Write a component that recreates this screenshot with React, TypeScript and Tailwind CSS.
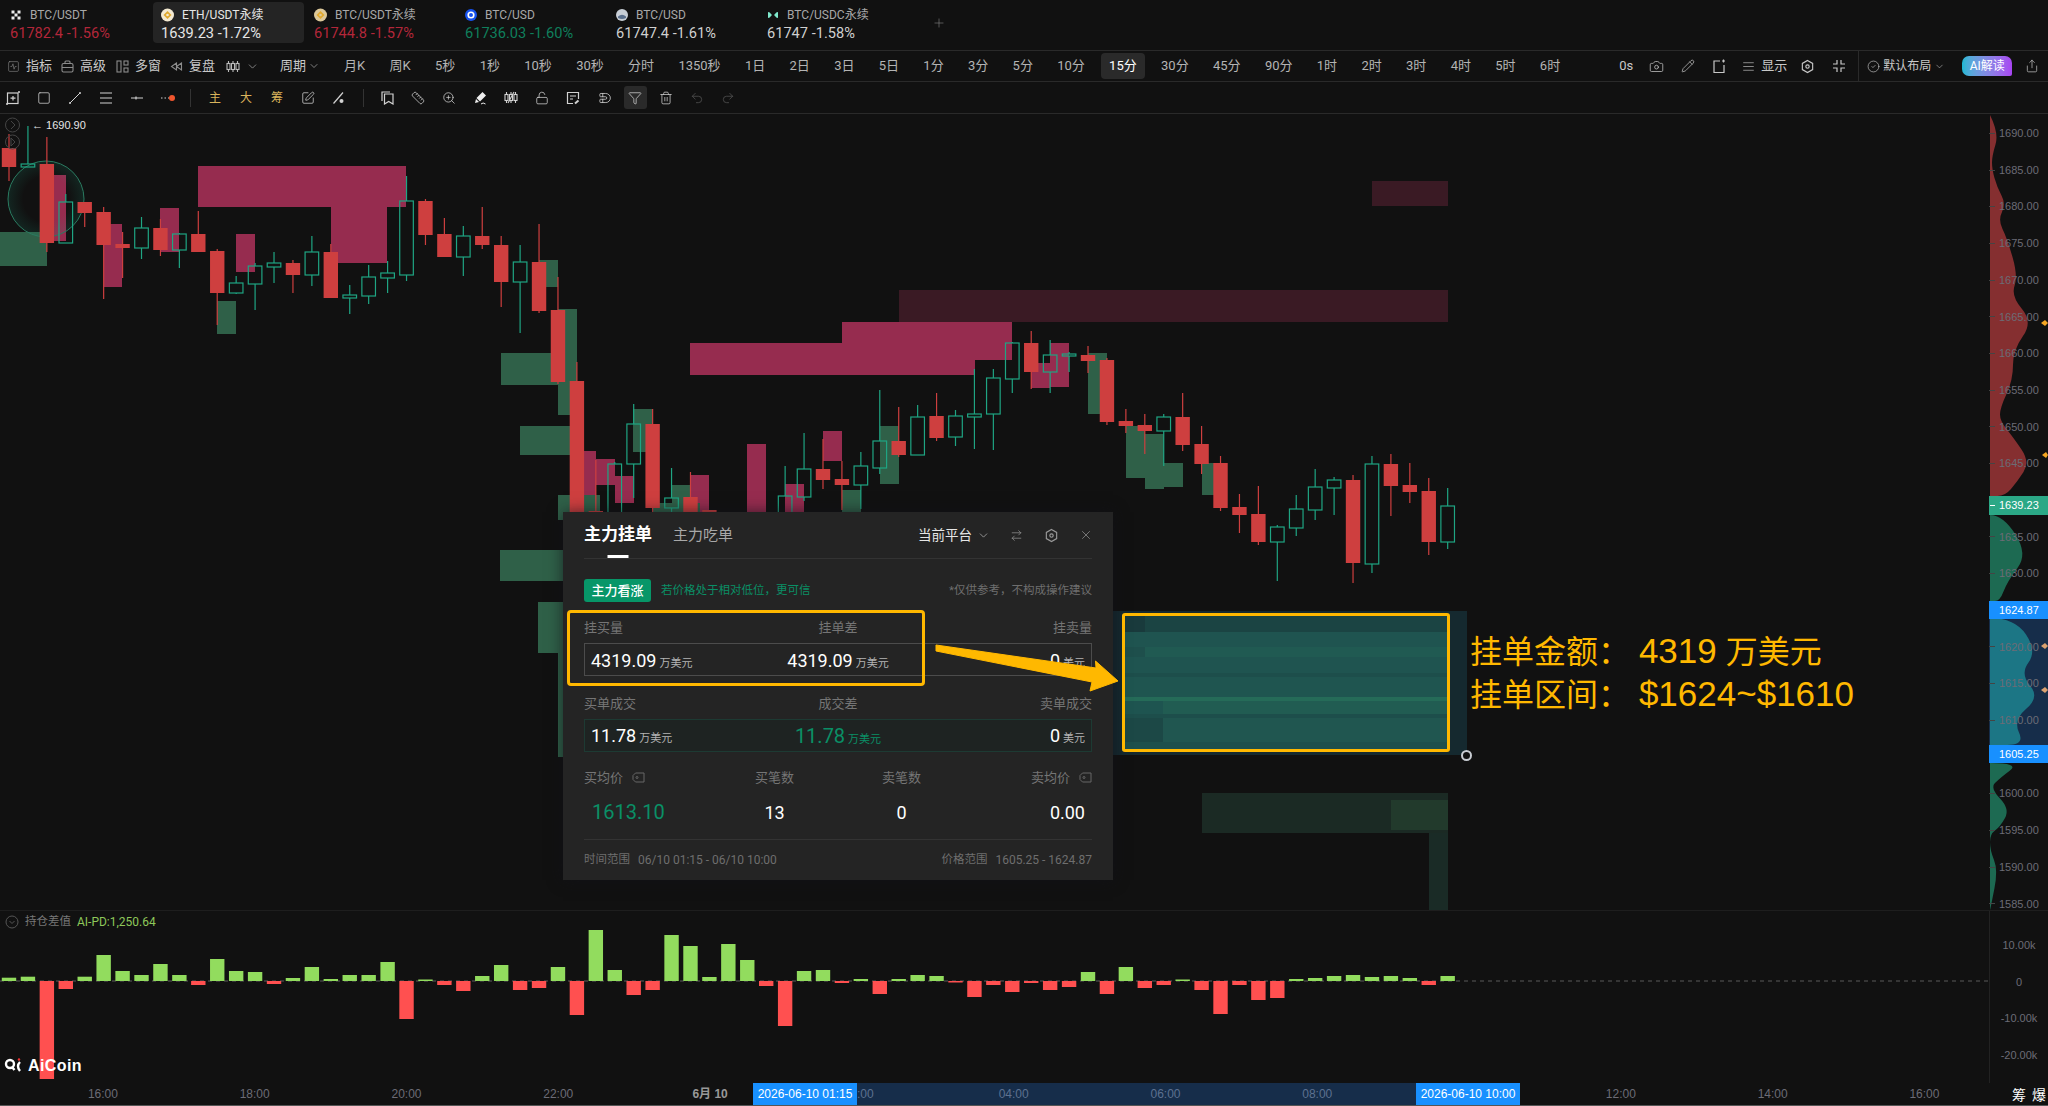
import React from 'react';
import {
  SquareActivity, Camera, Pencil, AlignJustify, ChevronDown, CircleCheck, Share, Square, Ruler, ZoomIn, LockOpen,
  Magnet, Filter, Trash2, Undo2, Redo2, Plus, X, ArrowRightLeft, SquarePen,
} from 'lucide-react';

const RED = '#ce3f3f';
const TEAL = '#1fa583';
const PINK = '#962c4f';
const MOSS = '#2f6048';

// [up, high, top, bottom, low] in page pixels
const candles: [number, number, number, number, number][] = [
  [0, 134, 148, 167, 181], [1, 126, 164, 167, 167], [0, 137, 164, 243, 252], [1, 194, 202, 243, 243],
  [0, 202, 202, 213, 227], [0, 207, 212, 245, 299], [0, 232, 244, 248, 278], [1, 217, 228, 248, 259],
  [0, 219, 228, 250, 256], [1, 233, 234, 250, 268], [0, 211, 234, 252, 252], [0, 249, 251, 293, 325],
  [1, 276, 283, 293, 294], [1, 263, 266, 284, 310], [1, 252, 263, 267, 283], [0, 260, 263, 275, 293],
  [1, 236, 252, 275, 286], [0, 244, 252, 298, 298], [1, 285, 295, 298, 314], [1, 265, 277, 296, 304],
  [1, 261, 273, 278, 293], [1, 176, 201, 275, 281], [0, 199, 201, 235, 245], [0, 218, 234, 257, 257],
  [1, 226, 236, 257, 276], [0, 207, 236, 245, 249], [0, 236, 245, 282, 307], [1, 245, 262, 282, 333],
  [0, 224, 262, 311, 313], [0, 277, 310, 382, 384], [0, 362, 381, 520, 520], [0, 460, 511, 520, 520],
  [1, 462, 464, 520, 520], [1, 404, 424, 464, 498], [0, 409, 424, 508, 512], [1, 468, 498, 508, 520],
  [0, 472, 497, 520, 520], [0, 510, 510, 520, 520], [1, 520, 520, 520, 520], [1, 520, 520, 520, 520],
  [1, 520, 520, 520, 520], [1, 466, 496, 520, 520], [1, 433, 469, 497, 501], [0, 439, 469, 480, 489],
  [0, 461, 479, 485, 510], [1, 452, 466, 485, 509], [1, 390, 441, 468, 474], [0, 407, 441, 455, 457],
  [1, 405, 417, 455, 455], [0, 393, 416, 438, 441], [1, 410, 416, 437, 446], [1, 369, 414, 417, 449],
  [1, 369, 378, 414, 450], [1, 342, 343, 379, 393], [0, 331, 343, 372, 389], [1, 340, 355, 372, 393],
  [1, 352, 354, 356, 372], [0, 346, 355, 361, 373], [0, 358, 360, 422, 425], [0, 409, 421, 426, 433],
  [0, 414, 425, 431, 454], [1, 414, 417, 431, 466], [0, 393, 417, 445, 451], [0, 426, 444, 464, 474],
  [0, 456, 463, 508, 511], [0, 494, 507, 515, 533], [0, 486, 514, 542, 545], [1, 525, 527, 542, 581],
  [1, 495, 509, 528, 536], [1, 469, 487, 510, 520], [1, 477, 480, 488, 515], [0, 475, 480, 563, 583],
  [1, 456, 464, 564, 573], [0, 454, 464, 486, 516], [0, 463, 485, 492, 503], [0, 478, 491, 542, 555],
  [1, 488, 506, 542, 549],
];

// [x1, x2, y1, y2, colour]
const blocks: [number, number, number, number, string][] = [
  [899, 1448, 290, 322, '#3a1a24'], [1372, 1448, 181, 206, '#3a1a24'],
  [198, 406, 166, 207, PINK], [331, 387, 207, 263, PINK], [54, 66, 175, 241, PINK], [104, 122, 224, 287, PINK],
  [160, 179, 208, 252, PINK], [236, 255, 234, 272, PINK], [690, 975, 343, 375, PINK], [842, 1012, 322, 360, PINK],
  [583, 596, 451, 504, PINK], [595, 615, 459, 485, PINK], [615, 634, 476, 503, PINK], [690, 709, 475, 520, PINK],
  [747, 766, 444, 520, PINK], [823, 842, 431, 461, PINK], [785, 804, 484, 520, PINK], [1031, 1050, 363, 388, PINK],
  [1050, 1069, 343, 387, PINK],
  [0, 47, 232, 266, MOSS], [217, 236, 301, 334, MOSS], [501, 559, 353, 385, MOSS], [520, 570, 426, 455, MOSS],
  [539, 558, 260, 287, MOSS], [558, 577, 309, 415, MOSS], [558, 600, 495, 520, MOSS], [633, 653, 409, 452, MOSS],
  [672, 691, 485, 520, MOSS], [653, 700, 503, 520, MOSS], [842, 861, 490, 520, MOSS], [880, 899, 426, 484, MOSS],
  [1088, 1107, 353, 414, MOSS], [1126, 1145, 426, 478, MOSS], [1145, 1164, 434, 489, MOSS], [1164, 1183, 463, 487, MOSS],
  [1202, 1221, 463, 495, MOSS], [500, 563, 550, 581, MOSS], [538, 563, 602, 653, MOSS], [558, 563, 653, 757, MOSS],
  [1202, 1448, 793, 833, '#1b2a24'], [1391, 1448, 800, 830, '#223a2c'], [1429, 1448, 833, 910, '#1a2b26'],
  // highlighted order zone
  [1113, 1467, 611, 755, '#15292f'], [1122, 1145, 614, 632, '#193a3c'], [1145, 1449, 614, 632, '#1b4443'],
  [1122, 1449, 632, 647, '#1f5450'], [1145, 1449, 647, 657, '#205a52'], [1122, 1145, 647, 657, '#1e4f4c'],
  [1122, 1449, 657, 673, '#1f5450'], [1122, 1449, 673, 677, '#1d4e4b'], [1122, 1449, 677, 697, '#1f5550'],
  [1122, 1449, 697, 701, '#256b58'], [1163, 1449, 701, 714, '#215c52'], [1122, 1163, 701, 714, '#1e5450'],
  [1122, 1449, 714, 718, '#1d4e4b'], [1163, 1449, 718, 742, '#205650'], [1122, 1163, 718, 742, '#1c4846'],
  [1122, 1449, 742, 751, '#1e504c'],
];

const pd = [
  3.3, 4.3, -98, -8, 4.3, 26, 10, 6, 17, 6, -4, 22, 10, 9, -3, 3, 14, 2, 6, 6, 19, -38, 1.5, -4, -10, 5, 16, -9, -7, 14,
  -34, 51, 11, -14, -9, 46, 35, 4, 37, 21, -5, -45, 10, 11, -2, 2, -13, 2, 6, 5, -1.5, -16, -4, -11, -2, -9, -6, 9, -13,
  14, -7, -4, 1.5, -9, -33, -4, -19, -17, 2, 3, 5, 6, 4, 5, 3, -4, 5,
];

// 1640, 1625 and 1605 sit under the price tags
const prices = [
  '1690.00', '1685.00', '1680.00', '1675.00', '1670.00', '1665.00', '1660.00', '1655.00', '1650.00', '1645.00', '',
  '1635.00', '1630.00', '', '1620.00', '1615.00', '1610.00', '', '1600.00', '1595.00', '1590.00', '1585.00',
];

const periods = [
  '月K', '周K', '5秒', '1秒', '10秒', '30秒', '分时', '1350秒', '1日', '2日', '3日', '5日', '1分', '3分', '5分', '10分', '15分',
  '30分', '45分', '90分', '1时', '2时', '3时', '4时', '5时', '6时',
];

const times = ['16:00', '18:00', '20:00', '22:00', '6月 10', '', '04:00', '06:00', '08:00', '', '12:00', '14:00', '16:00'];

const candleX = (i: number) => 9 + 18.93 * i;

// rounds the corners of a depth outline
const smooth = (pts: number[][]) => {
  let d = `M${pts[0][0]} ${pts[0][1]}`;
  for (let i = 1; i < pts.length - 1; i++) {
    const [x, y] = pts[i];
    const [nx, ny] = pts[i + 1];
    d += ` Q${x} ${y} ${(x + nx) / 2} ${(y + ny) / 2}`;
  }
  const last = pts[pts.length - 1];
  return `${d} L${last[0]} ${last[1]} Z`;
};

const CoinIcon = ({ kind }: { kind: number }) => {
  if (kind === 0)
    return (
      <svg width="12" height="12" viewBox="0 0 12 12" fill="#eee">
        <rect x="1.5" y="1.5" width="3" height="3" /><rect x="7.5" y="1.5" width="3" height="3" />
        <rect x="4.5" y="4.5" width="3" height="3" />
        <rect x="1.5" y="7.5" width="3" height="3" /><rect x="7.5" y="7.5" width="3" height="3" />
      </svg>
    );
  if (kind === 1 || kind === 2)
    return (
      <svg width="13" height="14" viewBox="0 0 13 14">
        <circle cx="6.5" cy="7" r="6.5" fill={kind === 1 ? '#f4ead2' : '#dcc89a'} />
        <path d="M6.5 3 L10.5 7 L6.5 11 L2.5 7 Z" fill="#e0a92e" />
        <circle cx="6.5" cy="7" r="1.3" fill={kind === 1 ? '#f4ead2' : '#dcc89a'} />
      </svg>
    );
  if (kind === 3)
    return (
      <svg width="12" height="12" viewBox="0 0 12 12">
        <circle cx="6" cy="6" r="6" fill="#1652f0" />
        <circle cx="6" cy="6" r="2.8" fill="none" stroke="#fff" strokeWidth="1.6" />
      </svg>
    );
  if (kind === 4)
    return (
      <svg width="12" height="12" viewBox="0 0 12 12">
        <circle cx="6" cy="6" r="6" fill="#c8ced6" />
        <path d="M2 7.5 Q6 4 10 7.5 L10 9 Q6 11 2 9 Z" fill="#5a6f8c" />
      </svg>
    );
  return (
    <svg width="12" height="12" viewBox="0 0 12 12" fill="#7fe8cc">
      <path d="M1 3 Q3 3 4 5 L5 6 L4 7 Q3 9 1 9 Z" />
      <path d="M11 3 Q9 3 8 5 L7 6 L8 7 Q9 9 11 9 Z" />
    </svg>
  );
};

const tabs = [
  { name: 'BTC/USDT', price: '61782.4', change: '-1.56%', color: 'text-[#b3273a]' },
  { name: 'ETH/USDT永续', price: '1639.23', change: '-1.72%', color: 'text-[#e6e6e6]', active: true },
  { name: 'BTC/USDT永续', price: '61744.8', change: '-1.57%', color: 'text-[#b3273a]' },
  { name: 'BTC/USD', price: '61736.03', change: '-1.60%', color: 'text-[#0f7f5c]' },
  { name: 'BTC/USD', price: '61747.4', change: '-1.61%', color: 'text-[#d0d0d0]' },
  { name: 'BTC/USDC永续', price: '61747', change: '-1.58%', color: 'text-[#d0d0d0]' },
];

const TabBar = () => (
  <div className="flex h-[51px] shrink-0 items-start border-b border-[#2a2a2a] pl-[2px]">
    {tabs.map((tab, i) => (
      <div
        key={i}
        className={`mt-[2px] flex h-[41px] w-[151px] flex-col justify-center gap-[3px] rounded-[4px] pl-[8px] pt-[3px] ${tab.active ? 'mr-[2px] w-[149px] bg-[#242424]' : ''}`}
      >
        <div className={`flex h-[14px] items-center gap-[8px] text-[12px] ${tab.active ? 'text-[#e6e6e6]' : 'text-[#a8a8a8]'}`}>
          <CoinIcon kind={i} />
          <span>{tab.name}</span>
        </div>
        <div className={`h-[16px] text-[14.6px] leading-[16px] ${tab.color}`}>
          {tab.price} {tab.change}
        </div>
      </div>
    ))}
    <Plus size={14} strokeWidth={1} className="ml-[22px] mt-[16px] text-[#888]" />
  </div>
);

const HexIcon = () => (
  <svg width="15" height="15" viewBox="0 0 16 16" fill="none" stroke="currentColor" strokeWidth="1.2">
    <path d="M8 1.5 L13.5 4.7 V11.3 L8 14.5 L2.5 11.3 V4.7 Z" />
    <circle cx="8" cy="8" r="1.8" />
  </svg>
);

const ShrinkIcon = () => (
  <svg width="14" height="14" viewBox="0 0 14 14" fill="none" stroke="currentColor" strokeWidth="1.2">
    <path d="M5 1 V5 H1 M9 1 V5 H13 M5 13 V9 H1 M9 13 V9 H13" />
  </svg>
);

const BagIcon = () => (
  <svg width="13" height="13" viewBox="0 0 13 13" fill="none" stroke="#8c8c8c" strokeWidth="1.1">
    <rect x="1" y="3.5" width="11" height="8.5" rx="1.5" />
    <path d="M1 7.5 H12 M4 3.5 V2 Q4 1 5 1 H8 Q9 1 9 2 V3.5" />
  </svg>
);

const WindowsIcon = () => (
  <svg width="13" height="13" viewBox="0 0 13 13" fill="none" stroke="#8c8c8c" strokeWidth="1.1">
    <rect x="1" y="1" width="4" height="11" />
    <rect x="8" y="1" width="4" height="4" />
    <rect x="8" y="8" width="4" height="4" />
  </svg>
);

const ReplayIcon = () => (
  <svg width="13" height="13" viewBox="0 0 13 13" fill="none" stroke="#8c8c8c" strokeWidth="1.1">
    <path d="M6.5 3 L1.5 6.5 L6.5 10 Z M11.5 3 L6.5 6.5 L11.5 10 Z" />
  </svg>
);

const CandlesIcon = ({ slash }: { slash?: boolean }) => (
  <svg width="14" height="13" viewBox="0 0 14 13" fill="none" stroke="currentColor" strokeWidth="1.1">
    <path d="M2.5 1 V12 M7 1 V12 M11.5 1 V12" />
    <rect x="1" y="3.5" width="3" height="6" fill="#111" />
    <rect x="5.5" y="3.5" width="3" height="6" fill="#111" />
    <rect x="10" y="3.5" width="3" height="6" fill="#111" />
    {slash && <path d="M4 12 L10 1" />}
  </svg>
);

const toolIcon = 'flex w-[31px] justify-center';

const Toolbar = () => (
  <div className="flex h-[31px] shrink-0 items-center border-b border-[#2a2a2a] pl-[7px] text-[13px] text-[#c8c8c8]">
    <div className="flex items-center gap-[6px]"><SquareActivity size={13} strokeWidth={1.1} className="text-[#8c8c8c]" />指标</div>
    <div className="ml-[9px] flex items-center gap-[6px]"><BagIcon />高级</div>
    <div className="ml-[10px] flex items-center gap-[6px]"><WindowsIcon />多窗</div>
    <div className="ml-[9px] flex items-center gap-[6px]"><ReplayIcon />复盘</div>
    <div className="ml-[11px] flex items-center gap-[6px] text-[#bbb]">
      <CandlesIcon />
      <ChevronDown size={13} strokeWidth={1.2} />
    </div>
    <div className="ml-[21px] flex items-center gap-[2px]">周期<ChevronDown size={12} strokeWidth={1.2} /></div>
    <div className="ml-[24px] flex items-center gap-[24.3px] text-[#b4b4b4]">
      {periods.map((p) => (
        <span key={p} className={p === '15分' ? '-mx-[8px] rounded-[4px] bg-[#2a2a2a] px-[8px] py-[3px] text-white' : ''}>{p}</span>
      ))}
    </div>
    <span className="ml-[59px]">0s</span>
    <div className="ml-[8px] flex w-[31px] justify-center"><Camera size={15} strokeWidth={1.2} /></div>
    <div className={toolIcon}><Pencil size={14} strokeWidth={1.2} /></div>
    <div className={toolIcon}>
      <svg width="14" height="15" viewBox="0 0 14 15" fill="none" stroke="currentColor" strokeWidth="1.2">
        <path d="M8 2 H2 V13.5 H12 V6 M11.5 0.5 V3.5 M10 2 H13" />
      </svg>
    </div>
    <div className="ml-[8px] flex items-center gap-[6px]"><AlignJustify size={13} strokeWidth={1.2} />显示</div>
    <div className="ml-[13px] flex w-[15px] justify-center"><HexIcon /></div>
    <div className="ml-[16px] flex w-[15px] justify-center"><ShrinkIcon /></div>
    <div className="ml-[12px] h-full w-px bg-[#2a2a2a]" />
    <div className="ml-[8px] flex items-center gap-[3px] text-[12px]">
      <CircleCheck size={13} strokeWidth={1.2} />
      默认布局
      <ChevronDown size={11} strokeWidth={1.2} />
    </div>
    <div className="ml-[17px] flex h-[20px] w-[50px] items-center justify-center rounded-l-[7px] rounded-tr-[7px] rounded-br-[2px] bg-gradient-to-r from-[#18b8d4] to-[#a844f2] text-[12px] text-white">
      AI解读
    </div>
    <Share size={14} strokeWidth={1.2} className="ml-[13px]" />
  </div>
);

const ToolRow = () => (
  <div className="flex h-[32px] shrink-0 items-center border-b border-[#2a2a2a] text-[#d2d2d2]">
    <div className="-ml-[2.5px] flex items-center">
      <div className={toolIcon}>
        <svg width="14" height="14" viewBox="0 0 14 14" fill="none" stroke="currentColor" strokeWidth="1.2">
          <rect x="1.5" y="2" width="10.5" height="10.5" />
          <path d="M7 5 V9.5 M4.5 7.2 H9.5" />
          <circle cx="13" cy="1" r="1" fill="currentColor" stroke="none" />
          <circle cx="1" cy="13" r="1" fill="currentColor" stroke="none" />
        </svg>
      </div>
      <div className={toolIcon}><Square size={14} strokeWidth={1.3} className="rounded-none" /></div>
      <div className={toolIcon}>
        <svg width="14" height="14" viewBox="0 0 14 14" fill="currentColor" stroke="currentColor" strokeWidth="1">
          <path d="M2 12 L12 2" />
          <circle cx="2" cy="12" r="0.6" />
          <circle cx="12" cy="2" r="0.6" />
        </svg>
      </div>
      <div className={toolIcon}>
        <svg width="14" height="12" viewBox="0 0 14 12" stroke="currentColor" strokeWidth="1.2"><path d="M1 1 H13 M1 6 H13 M1 11 H13" /></svg>
      </div>
      <div className={toolIcon}>
        <svg width="14" height="14" viewBox="0 0 14 14" stroke="currentColor" strokeWidth="1.2"><path d="M1 7 H13 M6 5.5 V8.5" /></svg>
      </div>
      <div className={toolIcon}>
        <svg width="16" height="14" viewBox="0 0 16 14">
          <path d="M1 7 H9" stroke="currentColor" strokeWidth="1.2" strokeDasharray="1.5 2" />
          <circle cx="12" cy="7" r="3" fill="#f0562e" />
        </svg>
      </div>
    </div>
    <div className="ml-[6.5px] h-[18px] w-px bg-[#333]" />
    <div className="ml-[8.5px] flex items-center text-[12px] text-[#d9b45c]">
      <div className={toolIcon}>主</div>
      <div className={toolIcon}>大</div>
      <div className={toolIcon}>筹</div>
      <div className={toolIcon}><SquarePen size={14} strokeWidth={1.3} className="text-[#d2d2d2]" /></div>
      <div className={toolIcon}>
        <svg width="14" height="14" viewBox="0 0 14 14" stroke="#d2d2d2" strokeWidth="1.2">
          <path d="M1.5 12.5 L11 1.5" />
          <circle cx="9.5" cy="10" r="2" fill="#d2d2d2" stroke="none" />
        </svg>
      </div>
    </div>
    <div className="ml-[8.5px] h-[18px] w-px bg-[#333]" />
    <div className="ml-[7.5px] flex items-center">
      <div className={toolIcon}>
        <svg width="13" height="14" viewBox="0 0 13 14" fill="none" stroke="currentColor" strokeWidth="1.2">
          <path d="M3.5 3 H12 V13 L7.7 10.5 L3.5 13 Z M1 10 V1 H9" />
        </svg>
      </div>
      <div className={toolIcon}><Ruler size={14} strokeWidth={1.3} /></div>
      <div className={toolIcon}><ZoomIn size={14} strokeWidth={1.3} /></div>
      <div className={toolIcon}>
        <svg width="14" height="14" viewBox="0 0 14 14" fill="#eee">
          <path d="M9.5 1 L13 4.5 L7 10.5 L3.5 7 Z" />
          <path d="M3 8 L6 11 L2 12 Z" />
          <path d="M8 13 Q10 11 12.5 13" fill="none" stroke="#eee" />
        </svg>
      </div>
      <div className={toolIcon}><CandlesIcon slash /></div>
      <div className={toolIcon}><LockOpen size={14} strokeWidth={1.3} /></div>
      <div className={toolIcon}>
        <svg width="14" height="14" viewBox="0 0 14 14" fill="none" stroke="currentColor" strokeWidth="1.2">
          <path d="M7 12.5 H1.5 V1.5 H12.5 V8" />
          <path d="M4 5 H10 M4 8 H7" />
          <path d="M9 12.5 L12.5 9.5" strokeWidth="2" />
        </svg>
      </div>
      <div className={toolIcon}><Magnet size={14} strokeWidth={1.3} className="rotate-45" /></div>
      <div className="mx-[4px] flex h-[23px] w-[23px] items-center justify-center rounded-[3px] bg-[#2a2a2a]"><Filter size={14} strokeWidth={1.3} /></div>
      <div className={toolIcon}><Trash2 size={14} strokeWidth={1.3} /></div>
      <div className={toolIcon}><Undo2 size={14} strokeWidth={1.3} className="text-[#555]" /></div>
      <div className={toolIcon}><Redo2 size={14} strokeWidth={1.3} className="text-[#555]" /></div>
    </div>
  </div>
);

const PriceChart = () => (
  <svg width="1989" height="796" viewBox="0 114 1989 796" className="shrink-0 [font-family:'Liberation_Sans',sans-serif]">
    <defs>
      <radialGradient id="pulse">
        <stop offset="0.6" stopColor="#1fa583" stopOpacity="0" />
        <stop offset="1" stopColor="#1fa583" stopOpacity="0.14" />
      </radialGradient>
    </defs>
    {blocks.map(([x1, x2, y1, y2, c], i) => (
      <rect key={i} x={x1} y={y1} width={x2 - x1} height={y2 - y1} fill={c} />
    ))}
    <circle cx="46" cy="199" r="38" fill="url(#pulse)" stroke="#2a7a60" strokeWidth="1" />
    {candles.map(([up, high, top, bot, low], i) => {
      const x = candleX(i);
      const c = up ? TEAL : RED;
      return (
        <g key={i}>
          <line x1={x} x2={x} y1={high} y2={top} stroke={c} strokeWidth="1.2" />
          <line x1={x} x2={x} y1={bot} y2={low} stroke={c} strokeWidth="1.2" />
          {up ? (
            <rect x={x - 6.8} y={top} width="13.6" height={Math.max(bot - top, 1)} fill="none" stroke={c} strokeWidth="1.2" />
          ) : (
            <rect x={x - 7.2} y={top} width="14.4" height={Math.max(bot - top, 1)} fill={c} />
          )}
        </g>
      );
    })}
    <circle cx="12.5" cy="125" r="7" fill="none" stroke="#444" />
    <path d="M11 121 L15 125 L11 129" fill="none" stroke="#444" />
    <circle cx="12.5" cy="142" r="7" fill="none" stroke="#444" />
    <path d="M11 138 L15 142 L11 146 Z" fill="none" stroke="#444" />
    <text x="32" y="129" fontSize="11" fill="#e6e6e6">← 1690.90</text>
  </svg>
);

const depthRed = [[1990, 115], [1999, 133], [1992, 156], [1992, 169], [1997, 187], [2006, 204], [1998, 220], [2007, 238], [2018, 276], [2011, 296], [2033, 322], [2013, 350], [2013, 380], [2000, 408], [2000, 421], [2013, 437], [2030, 462], [2017, 482], [2005, 496], [1990, 496]];
const depthUpper = [[1990, 515], [2003, 515], [2028, 554], [2007, 582], [2000, 601], [1990, 601]];
const depthBand = [[1990, 618], [2015, 618], [2037, 651], [2020, 674], [2040, 697], [2013, 720], [2025, 745], [1990, 745]];
const depthLower = [[1990, 763], [2020, 763], [2000, 778], [1990, 788], [2010, 809], [2000, 827], [1990, 834], [1990, 850], [1998, 870], [1991, 906], [1990, 910]];

const PriceAxis = () => (
  <div className="relative w-[59px] shrink-0 overflow-hidden text-[11px] text-[#6c6c76] [font-family:'Liberation_Sans',sans-serif]">
    <svg width="59" height="796" viewBox="1989 114 59 796" className="absolute inset-0">
      <rect x="1989" y="618" width="59" height="127" fill="#162d4a" />
      <path fill="#852f30" d={smooth(depthRed)} />
      <path fill="#1d6a52" d={smooth(depthUpper)} />
      <path fill="#1c7685" d={smooth(depthBand)} />
      <path fill="#1d6a52" d={smooth(depthLower)} />
      <path d="M2041 323 L2045 320 L2048 323 L2045 326 Z" fill="#f5a623" />
      <path d="M2042 455 L2046 452 L2048 455 L2046 458 Z" fill="#f5a623" />
      <path d="M2041 646 L2045 643 L2048 646 L2045 649 Z" fill="#d9a070" />
      <path d="M2041 690 L2045 687 L2048 690 L2045 693 Z" fill="#d9a070" />
    </svg>
    <div className="relative flex flex-col pl-[10px] pt-[1px]">
      {prices.map((p, i) => (
        <div key={i} className="flex h-[36.7px] shrink-0 items-center">
          <span className="absolute left-0 h-px w-[6px] bg-[#444]" />
          {p}
        </div>
      ))}
    </div>
    <div className="absolute left-0 right-0 top-[382px] flex h-[19px] items-center bg-[#2ba886] pl-[10px] text-white">
      <span className="absolute left-[1px] h-px w-[5px] bg-white" />1639.23
    </div>
    <div className="absolute left-0 right-0 top-[487px] flex h-[18px] items-center bg-[#1890ff] pl-[10px] text-white">1624.87</div>
    <div className="absolute left-0 right-0 top-[631px] flex h-[18px] items-center bg-[#1890ff] pl-[10px] text-white">1605.25</div>
  </div>
);

const SubChart = () => (
  <div className="relative flex h-[173px] shrink-0 border-t border-[#1e1e1e] [font-family:'Liberation_Sans',sans-serif]">
    <svg width="1989" height="172" viewBox="0 911 1989 172" className="shrink-0">
      <line x1="0" x2="1989" y1="981" y2="981" stroke="#5a5a5a" strokeDasharray="4 4" />
      {pd.map((v, i) => (
        <rect
          key={i}
          x={candleX(i) - 7.2}
          y={v > 0 ? 981 - v : 981}
          width="14.4"
          height={Math.abs(v)}
          fill={v > 0 ? '#92dc5e' : '#ff5050'}
        />
      ))}
    </svg>
    <div className="flex w-[59px] flex-col items-center border-l border-[#222] pt-[16px] text-[11px] text-[#6c6c76]">
      <div className="flex h-[37px] shrink-0 items-center">10.00k</div>
      <div className="flex h-[36px] shrink-0 items-center">0</div>
      <div className="flex h-[37px] shrink-0 items-center">-10.00k</div>
      <div className="flex h-[37px] shrink-0 items-center">-20.00k</div>
    </div>
    <div className="absolute left-[5px] top-[2px] flex items-center gap-[6px] [font-family:Roboto,'Noto_Sans_CJK_SC',sans-serif]">
      <svg width="14" height="14" viewBox="0 0 14 14" fill="none" stroke="#555">
        <circle cx="7" cy="7" r="6" /><path d="M4.5 6 L7 8.5 L9.5 6" />
      </svg>
      <span className="text-[11.5px] text-[#777]">持仓差值</span>
      <span className="text-[12px] text-[#8ec85a]">AI-PD:1,250.64</span>
    </div>
    <div className="absolute left-[4px] top-[143px] flex items-center gap-[4px] text-[16px] font-bold tracking-[0.4px] text-white">
      <svg width="20" height="18" viewBox="0 0 20 18" fill="none" stroke="#fff" strokeWidth="2.4">
        <circle cx="6" cy="7" r="4" />
        <path d="M8 10 L10.5 13 M16 5 Q12 9 16 14" />
        <circle cx="15" cy="2.5" r="1.2" fill="#e33" stroke="none" />
      </svg>
      AiCoin
    </div>
  </div>
);

const TimeAxis = () => (
  <div className="relative flex h-[23px] shrink-0 items-center border-b border-[#555] text-[12px] text-[#6c6c76] [font-family:'Liberation_Sans','Noto_Sans_CJK_SC',sans-serif]">
    <div className="absolute bottom-0 left-[753px] top-0 w-[767px] bg-[#162d4a]" />
    <div className="relative flex pl-[27px]">
      {times.map((t, i) => (
        <span key={i} className={`w-[151.8px] shrink-0 text-center ${i >= 5 && i <= 9 ? 'text-[#5d7190]' : ''} ${t === '6月 10' ? 'font-bold text-[#999]' : ''}`}>{t}</span>
      ))}
    </div>
    <div className="absolute bottom-0 left-[753px] top-0 flex w-[104px] items-center justify-center bg-[#1890ff] text-white">2026-06-10 01:15</div>
    <span className="absolute left-[857px] text-[#5d7190]">:00</span>
    <div className="absolute bottom-0 left-[1416px] top-0 flex w-[104px] items-center justify-center bg-[#1890ff] text-white">2026-06-10 10:00</div>
    <span className="absolute left-[2012px] text-[14px] text-white [font-family:'Noto_Sans_CJK_SC',sans-serif]">筹</span>
    <span className="absolute left-[2032px] text-[14px] text-white [font-family:'Noto_Sans_CJK_SC',sans-serif]">爆</span>
  </div>
);

const Unit = ({ children, green }: { children: React.ReactNode; green?: boolean }) => (
  <span className={`ml-[3px] text-[11px] ${green ? 'text-[#0a8f66]' : 'text-[#b4b4b4]'}`}>{children}</span>
);

const TagIcon = () => (
  <svg width="13" height="11" viewBox="0 0 13 11" fill="none" stroke="#666" className="ml-[9px]">
    <path d="M3.5 1 H12 V10 H3.5 L1 7.5 V3.5 Z" />
    <circle cx="5" cy="5.5" r="1" />
  </svg>
);

const OrderPanel = () => (
  <div className="absolute left-[563px] top-[512px] flex h-[368px] w-[550px] flex-col bg-[#242424] px-[21px] shadow-[0_0_14px_rgba(17,17,24,0.7)]">
    <div className="flex h-[47px] shrink-0 items-center border-b border-[#333]">
      <div className="relative flex h-full items-center text-[17px] font-bold text-white">
        主力挂单
        <span className="absolute bottom-0 left-1/2 h-[3px] w-[21px] -translate-x-1/2 bg-white" />
      </div>
      <span className="ml-[21px] text-[15px] text-[#a8a8a8]">主力吃单</span>
      <span className="ml-auto text-[13.5px] text-[#e6e6e6]">当前平台</span>
      <ChevronDown size={13} strokeWidth={1.3} className="ml-[5px] text-[#bbb]" />
      <ArrowRightLeft size={13} strokeWidth={1.3} className="ml-[20px] text-[#999]" />
      <div className="ml-[21px] text-[#999]"><HexIcon /></div>
      <X size={14} strokeWidth={1.2} className="ml-[20px] mr-[-1px] text-[#999]" />
    </div>
    <div className="mt-[20px] flex h-[23px] shrink-0 items-center">
      <span className="flex h-full w-[67px] items-center justify-center rounded-[3px] bg-[#079668] text-[13px] font-medium text-white">主力看涨</span>
      <span className="ml-[10px] text-[11.5px] text-[#0a8f66]">若价格处于相对低位，更可信</span>
      <span className="ml-auto text-[11.5px] text-[#6e6e6e]">*仅供参考，不构成操作建议</span>
    </div>
    <div className="mt-[16px] grid h-[18px] shrink-0 grid-cols-3 items-center text-[13px] text-[#757575]">
      <span>挂买量</span>
      <span className="text-center">挂单差</span>
      <span className="text-right">挂卖量</span>
    </div>
    <div className="mt-[7px] grid h-[33px] shrink-0 grid-cols-3 items-center border border-[#4c4c4c] px-[6px] pt-[1px] text-[18px] text-white">
      <span>4319.09<Unit>万美元</Unit></span>
      <span className="text-center">4319.09<Unit>万美元</Unit></span>
      <span className="text-right">0<Unit>美元</Unit></span>
    </div>
    <div className="mt-[18px] grid h-[18px] shrink-0 grid-cols-3 items-center text-[13px] text-[#757575]">
      <span>买单成交</span>
      <span className="text-center">成交差</span>
      <span className="text-right">卖单成交</span>
    </div>
    <div className="mt-[7px] grid h-[33px] shrink-0 grid-cols-3 items-center border border-[#1d3a33] bg-[#1e2322] px-[6px] text-[18px] text-white">
      <span>11.78<Unit>万美元</Unit></span>
      <span className="text-center text-[20px] text-[#0a8f66]">11.78<Unit green>万美元</Unit></span>
      <span className="text-right">0<Unit>美元</Unit></span>
    </div>
    <div className="mt-[16px] grid h-[18px] shrink-0 grid-cols-4 items-center text-[13px] text-[#757575]">
      <span className="flex items-center">买均价<TagIcon /></span>
      <span className="text-center">买笔数</span>
      <span className="text-center">卖笔数</span>
      <span className="flex items-center justify-end">卖均价<TagIcon /></span>
    </div>
    <div className="mt-[11px] grid h-[24px] shrink-0 grid-cols-4 items-center text-[18px] text-white">
      <span className="pl-[8px] text-[20px] text-[#0a8f66]">1613.10</span>
      <span className="text-center">13</span>
      <span className="text-center">0</span>
      <span className="pr-[7px] text-right">0.00</span>
    </div>
    <div className="mt-[18px] flex flex-1 items-center border-t border-[#333] text-[11.5px] text-[#6e6e6e]">
      <span>时间范围</span>
      <span className="ml-[8px] text-[12px]">06/10 01:15 - 06/10 10:00</span>
      <span className="ml-auto">价格范围</span>
      <span className="ml-[8px] text-[12px]">1605.25 - 1624.87</span>
    </div>
  </div>
);

const App = () => (
  <div className="relative flex h-[1106px] w-[2048px] flex-col overflow-hidden bg-[#111111] [font-family:Roboto,'Noto_Sans_CJK_SC',sans-serif]">
    <TabBar />
    <Toolbar />
    <ToolRow />
    <div className="flex h-[796px] shrink-0">
      <PriceChart />
      <PriceAxis />
    </div>
    <SubChart />
    <TimeAxis />

    <OrderPanel />

    {/* annotations drawn on top of the screenshot */}
    <div className="absolute left-[567px] top-[610px] h-[76px] w-[358px] rounded-[4px] border-[3px] border-[#ffb800]" />
    <svg className="absolute left-[930px] top-[640px]" width="195" height="56" viewBox="930 640 195 56">
      <polygon points="936,645 1096,668 1095.5,661 1118,681 1090,691 1092,682 936,651" fill="#ffb800" stroke="#ffb800" strokeLinejoin="round" />
    </svg>
    <div className="absolute left-[1122px] top-[613px] h-[139px] w-[328px] rounded-[3px] border-[3px] border-[#ffb800]" />
    <div className="absolute left-[1461px] top-[750px] h-[11px] w-[11px] rounded-full border-2 border-[#c8ccd2] bg-[#111]" />
    <div className="absolute left-[1470px] top-[630px] text-[32px] leading-[42px] text-[#ffb800] [font-family:'Liberation_Sans','Noto_Sans_CJK_SC',sans-serif]">
      <div>挂单金额： <span className="text-[35px]">4319</span> 万美元</div>
      <div>挂单区间： <span className="text-[35px]">$1624~$1610</span></div>
    </div>
  </div>
);

export default App;
